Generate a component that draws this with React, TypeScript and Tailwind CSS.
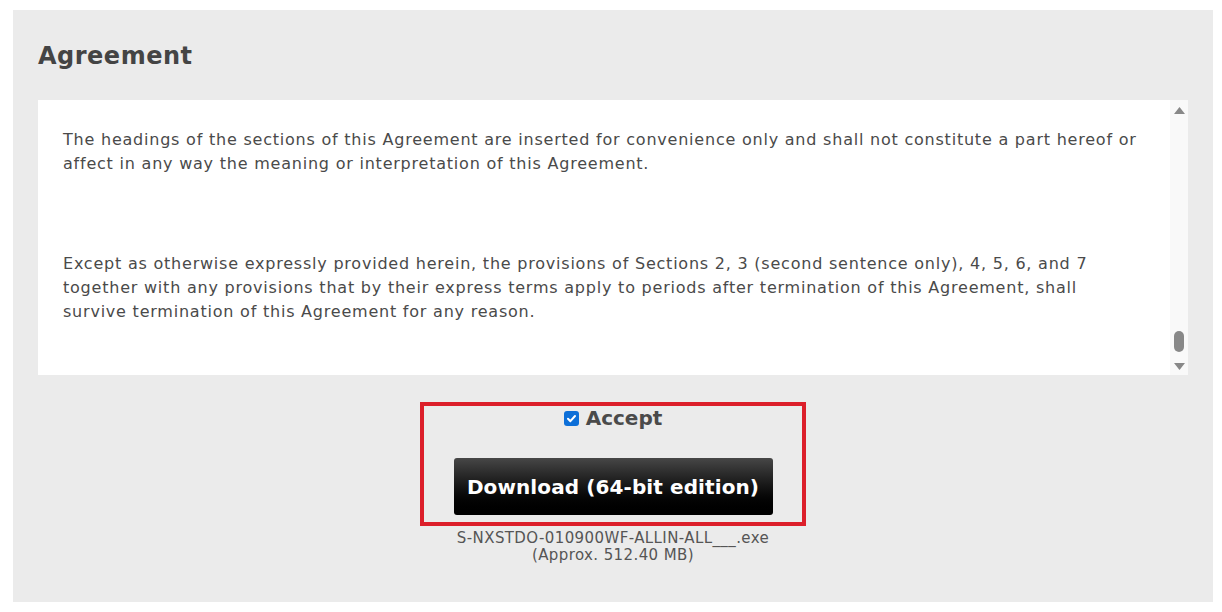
import React, { useState } from 'react';

const font = { fontFamily: '"DejaVu Sans", Verdana, sans-serif' };

const ScrollTrack = () => (
  <div className="w-[18px] shrink-0 bg-[#f9f9f9] flex flex-col items-center pt-[7px] pb-[5px]">
    <svg width="11" height="7" viewBox="0 0 11 7">
      <path d="M5.5 0 L11 7 L0 7 Z" fill="#888" />
    </svg>
    <div className="flex-1" />
    <div className="w-[10px] h-[21px] rounded-full bg-[#888]" />
    <svg width="11" height="7" viewBox="0 0 11 7" className="mt-[11px]">
      <path d="M0 0 L11 0 L5.5 7 Z" fill="#888" />
    </svg>
  </div>
);

const App = () => {
  const [accepted, setAccepted] = useState(true);

  return (
    <div className="h-[612px] w-[1222px] bg-white pt-[10px] pl-[13px]" style={font}>
      <div className="w-[1200px] h-[592px] bg-[#ebebeb] px-[25px] pt-[29px]">
        <h1 className="text-[24px] leading-[34px] font-bold tracking-[0.5px] text-[#444]">Agreement</h1>

        <div className="mt-[27px] flex h-[275px] bg-white">
          <div className="flex-1 pl-[25px] pr-[25px] pt-[28px] text-[16px] leading-[24px] tracking-[0.78px] text-[#4a4a4a] overflow-hidden">
            <p>
              The headings of the sections of this Agreement are inserted for convenience only and shall not constitute a
              part hereof or affect in any way the meaning or interpretation of this Agreement.
            </p>
            <p className="mt-[76px]">
              Except as otherwise expressly provided herein, the provisions of Sections 2, 3 (second sentence only), 4, 5,
              6, and 7 together with any provisions that by their express terms apply to periods after termination of this
              Agreement, shall survive termination of this Agreement for any reason.
            </p>
          </div>
          <ScrollTrack />
        </div>

        <div className="flex flex-col items-center mt-[27px]">
          <div className="w-[386px] border-[4px] border-[#dc1f2a] flex flex-col items-center pb-[7px]">
            <label className="flex items-center gap-[7px] h-[24px] cursor-pointer">
              <input
                type="checkbox"
                checked={accepted}
                onChange={(e) => setAccepted(e.target.checked)}
                className="sr-only"
              />
              <span
                className={
                  accepted
                    ? 'w-[15px] h-[15px] rounded-[3px] bg-[#0d6fd8] flex items-center justify-center'
                    : 'w-[15px] h-[15px] rounded-[3px] bg-white border border-[#767676]'
                }
              >
                {accepted && (
                  <svg width="11" height="11" viewBox="0 0 11 11">
                    <path d="M2 5.8 L4.4 8.2 L9 3" fill="none" stroke="#fff" strokeWidth="2" strokeLinecap="round" strokeLinejoin="round" />
                  </svg>
                )}
              </span>
              <span className="text-[20px] font-bold text-[#4a4a4a]">Accept</span>
            </label>
            <button className="mt-[28px] w-[319px] h-[57px] rounded-[3px] bg-gradient-to-b from-[#474747] to-[#000] text-white text-[20px] font-bold tracking-[0.1px]">
              Download (64-bit edition)
            </button>
          </div>
          <div className="mt-[4px] text-center text-[15px] leading-[17px] tracking-[0.4px] text-[#555]">
            <div>S-NXSTDO-010900WF-ALLIN-ALL___.exe</div>
            <div>(Approx. 512.40 MB)</div>
          </div>
        </div>
      </div>
    </div>
  );
};

export default App;
